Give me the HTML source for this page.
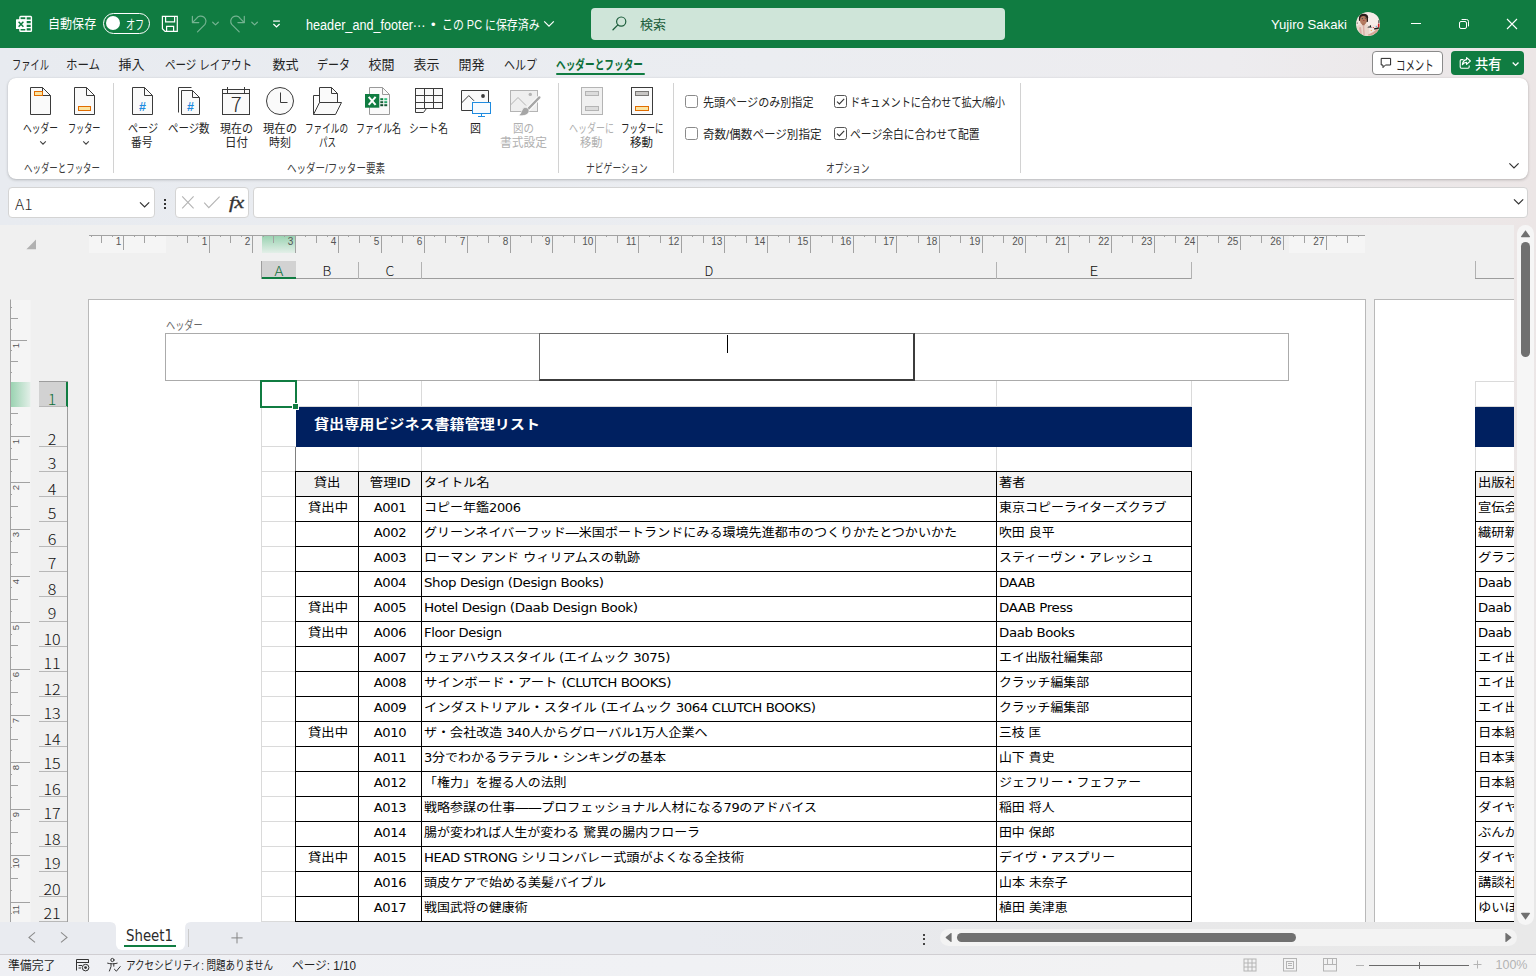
<!DOCTYPE html>
<html lang="ja"><head><meta charset="utf-8"><title>Excel</title>
<style>
html,body{margin:0;padding:0;}
body{width:1536px;height:976px;overflow:hidden;position:relative;background:#e9ebf0;font-family:"Liberation Sans","Noto Sans CJK JP",sans-serif;}
#app{position:absolute;left:0;top:0;width:1536px;height:976px;overflow:hidden;}
#app div,#app svg,#app span.t{position:absolute;}
#app svg{overflow:visible;}
span.t{white-space:nowrap;display:block;}
span.c{font-family:"DejaVu Sans","Noto Sans CJK JP",sans-serif;}
span.l{letter-spacing:-0.35px;}
</style></head>
<body><div id="app">
<div style="left:0px;top:0px;width:1536px;height:48px;background:#107c41;"></div>
<svg style="left:0;top:0" width="300" height="48" viewBox="0 0 300 48"><g fill="none" stroke="#fff" stroke-width="1.4"><rect x="19.9" y="16.5" width="11.5" height="14.7" rx="0.8"/><path d="M19.9 20.3H31.4M19.9 24H31.4M19.9 27.6H31.4M26 16.5V31.2"/></g><rect x="16" y="19.2" width="10" height="9.8" rx="0.6" fill="#fff"/><path d="M18.6 21.7 23.4 26.8M23.4 21.7 18.6 26.8" stroke="#107c41" stroke-width="1.5" fill="none"/><g fill="none" stroke="#fff" stroke-width="1.2" stroke-linejoin="miter"><path d="M162.4 16.4H177.3V31.3H165L162.4 28.7Z"/><path d="M165.6 16.4V21.8H174.6V16.4M166.6 31.3V26.4H173.6V31.3"/></g><g fill="none" stroke="#74b391" stroke-width="1.2" stroke-linecap="round" stroke-linejoin="round"><path d="M192.4 16.4V22.6H198.8"/><path d="M192.7 22.3 196.6 18.3A5.1 5.1 0 0 1 205 24.3L197.5 31.8"/></g><path d="M212.7 22.2 215.5 24.9 218.3 22.2" fill="none" stroke="#74b391" stroke-width="1.2" stroke-linecap="round" stroke-linejoin="round"/><g fill="none" stroke="#74b391" stroke-width="1.2" stroke-linecap="round" stroke-linejoin="round"><path d="M244.3 16.4V22.6H237.9"/><path d="M244 22.3 240.1 18.3A5.1 5.1 0 0 0 231.7 24.3L239.2 31.8"/></g><path d="M251.8 22.2 254.6 24.9 257.4 22.2" fill="none" stroke="#74b391" stroke-width="1.2" stroke-linecap="round" stroke-linejoin="round"/><path d="M273.1 21.1H279.9" fill="none" stroke="#fff" stroke-width="1.2"/><path d="M273.4 24 276.5 27 279.6 24" fill="none" stroke="#fff" stroke-width="1.2"/></svg>
<span class="t" id="t1" style="top:14px;font-size:13px;line-height:20px;color:#fff;left:48.3px;transform:scaleX(0.9266);transform-origin:0 50%;">自動保存</span>
<div style="left:102.5px;top:12.5px;width:47px;height:21px;border:1.4px solid #fff;border-radius:10.5px;box-sizing:border-box;"></div>
<div style="left:106.2px;top:16.3px;width:13.6px;height:13.6px;background:#fff;border-radius:7px;"></div>
<span class="t" id="t2" style="top:15px;font-size:13px;line-height:20px;color:#fff;left:126px;transform:scaleX(0.6996);transform-origin:0 50%;">オフ</span>
<span class="t" id="t3" style="top:14px;font-size:14px;line-height:22px;color:#fff;left:306px;transform:scaleX(0.9032);transform-origin:0 50%;">header_and_footer···</span>
<span class="t" id="t4" style="top:15px;font-size:13px;line-height:20px;color:#fff;left:431px;">•</span>
<span class="t" id="t5" style="top:15px;font-size:13px;line-height:20px;color:#fff;left:441.5px;transform:scaleX(0.8392);transform-origin:0 50%;">この PC に保存済み</span>
<svg style="left:543.2px;top:20px;" width="12" height="8" viewBox="0 0 12 8"><path d="M1.2 1.4 6 6.2 10.8 1.4" fill="none" stroke="#fff" stroke-width="1.2"/></svg>
<div style="left:591px;top:8px;width:414px;height:32px;background:#cfe5d9;border-radius:4px;"></div>
<svg style="left:611px;top:15px;" width="17" height="17" viewBox="0 0 17 17"><circle cx="10.2" cy="6.6" r="4.6" fill="none" stroke="#1d5e3c" stroke-width="1.2"/><path d="M6.9 9.9 2 14.8" stroke="#1d5e3c" stroke-width="1.3" stroke-linecap="round"/></svg>
<span class="t" id="t6" style="top:15px;font-size:13px;line-height:20px;color:#1d5e3c;left:640px;">検索</span>
<span class="t" id="t7" style="top:15px;font-size:13px;line-height:20px;color:#fff;left:1271px;transform:scaleX(1.0112);transform-origin:0 50%;">Yujiro Sakaki</span>
<svg style="left:1356px;top:12px" width="24" height="24" viewBox="0 0 24 24"><defs><clipPath id="av"><circle cx="12" cy="12" r="12"/></clipPath></defs>
<g clip-path="url(#av)"><rect width="24" height="24" fill="#f3e6e0"/>
<rect x="12" y="1" width="10" height="12" fill="#f6ece8"/>
<path d="M0.5 24V15.5C1.5 12.8 4 12.2 7 12.3L11.4 12.6C13 14 13.6 18 13.4 24Z" fill="#ead5ca"/>
<path d="M3 15.5 4.2 23.5H6L5 15ZM6.8 13 7.4 23.8H8.8L8.2 13Z" fill="#dbaea6"/>
<path d="M12 22.5C15 21.5 18.5 19.5 21.5 16.5L22.5 18.5C20 21.5 16 23.5 12.5 24Z" fill="#d9a594"/>
<ellipse cx="7.6" cy="5.3" rx="4.5" ry="3.5" fill="#2b1d1a"/><rect x="10.1" y="4.2" width="1.9" height="5.8" rx="0.8" fill="#2b1d1a"/><rect x="2.9" y="5.5" width="1.2" height="3.4" rx="0.6" fill="#2b1d1a"/>
<ellipse cx="7.4" cy="8.3" rx="3.4" ry="4.2" fill="#b57b60"/><rect x="6.1" y="11.6" width="2.6" height="1.6" fill="#a96f55"/>
<circle cx="6.3" cy="6.6" r="0.55" fill="#26414a"/><circle cx="9.3" cy="6.1" r="0.55" fill="#26414a"/><rect x="6.9" y="8.3" width="1.7" height="0.7" rx="0.3" fill="#9c3f3a"/>
<circle cx="1.2" cy="11" r="0.6" fill="#222"/>
<path d="M13.9 13.2H14.9V14.6L16 15.6H11.3L12.6 14.6H13.9Z" fill="#1c1c1c"/>
<circle cx="17.3" cy="15.5" r="0.6" fill="#e0202a"/><circle cx="20.3" cy="14.4" r="0.6" fill="#4aa3df"/><circle cx="15.3" cy="18.5" r="0.6" fill="#f0a030"/>
<rect x="21.9" y="11.4" width="1.6" height="4.2" rx="0.6" fill="#d61f26"/><path d="M18 16.2 22.6 15.2 23.5 16.6 18.4 17.8Z" fill="#1a1a1a"/><rect x="22.3" y="8.2" width="1.2" height="3" fill="#444"/>
</g></svg>
<div style="left:1411px;top:23px;width:10px;height:1px;background:#fff;"></div>
<svg style="left:1458px;top:18px;" width="12" height="12" viewBox="0 0 12 12"><g fill="none" stroke="#fff" stroke-width="1"><rect x="1.5" y="3.5" width="7" height="7" rx="1.5"/><path d="M3.6 1.5H8.5A2 2 0 0 1 10.5 3.5V8.4"/></g></svg>
<svg style="left:1506px;top:18px;" width="12" height="12" viewBox="0 0 12 12"><path d="M1 1 11 11M11 1 1 11" stroke="#fff" stroke-width="1.1"/></svg>
<div style="left:0px;top:48px;width:1536px;height:177px;background:linear-gradient(90deg,#e8ebf0 0%,#ebedf1 50%,#edecef 80%,#ece8e9 93%,#ece6e6 100%);"></div>
<span class="t" id="t8" style="top:55px;font-size:13px;line-height:20px;color:#242424;left:11.5px;transform:scaleX(0.7113);transform-origin:0 50%;">ファイル</span>
<span class="t" id="t9" style="top:55px;font-size:13px;line-height:20px;color:#242424;left:65.5px;transform:scaleX(0.8803);transform-origin:0 50%;">ホーム</span>
<span class="t" id="t10" style="top:55px;font-size:13px;line-height:20px;color:#242424;left:118.5px;">挿入</span>
<span class="t" id="t11" style="top:55px;font-size:13px;line-height:20px;color:#242424;left:164.5px;transform:scaleX(0.8104);transform-origin:0 50%;">ページ レイアウト</span>
<span class="t" id="t12" style="top:55px;font-size:13px;line-height:20px;color:#242424;left:272.5px;">数式</span>
<span class="t" id="t13" style="top:55px;font-size:13px;line-height:20px;color:#242424;left:316.5px;transform:scaleX(0.8458);transform-origin:0 50%;">データ</span>
<span class="t" id="t14" style="top:55px;font-size:13px;line-height:20px;color:#242424;left:368.5px;">校閲</span>
<span class="t" id="t15" style="top:55px;font-size:13px;line-height:20px;color:#242424;left:413.5px;">表示</span>
<span class="t" id="t16" style="top:55px;font-size:13px;line-height:20px;color:#242424;left:458.5px;">開発</span>
<span class="t" id="t17" style="top:55px;font-size:13px;line-height:20px;color:#242424;left:503.5px;transform:scaleX(0.8458);transform-origin:0 50%;">ヘルプ</span>
<span class="t" id="t18" style="top:55px;font-size:13px;line-height:20px;color:#0e6f3a;font-weight:700;left:556px;transform:scaleX(0.7435);transform-origin:0 50%;">ヘッダーとフッター</span>
<div style="left:556px;top:73px;width:89px;height:2.4px;background:#107c41;border-radius:1.2px;"></div>
<div style="left:1372px;top:51px;width:71px;height:24px;background:#fff;border:1px solid #8a8a8a;border-radius:4px;box-sizing:border-box;"></div>
<svg style="left:1380px;top:57px;" width="12" height="12" viewBox="0 0 12 12"><path d="M1.2 1.4H10.6V8H5.4L3 10.6V8H1.2Z" fill="none" stroke="#242424" stroke-width="1"/></svg>
<span class="t" id="t19" style="top:54px;font-size:14px;line-height:22px;color:#242424;left:1395.6px;transform:scaleX(0.6714);transform-origin:0 50%;">コメント</span>
<div style="left:1451px;top:51px;width:73px;height:24px;background:#107c41;border-radius:4px;"></div>
<svg style="left:1458px;top:56px;" width="14" height="14" viewBox="0 0 14 14"><g fill="none" stroke="#fff" stroke-width="1.1" stroke-linejoin="round"><path d="M5.5 3.6H3.4a1.2 1.2 0 0 0-1.2 1.2V11a1.2 1.2 0 0 0 1.2 1.2H10a1.2 1.2 0 0 0 1.2-1.2V9.6"/><path d="M8.6 1.6 12.4 5 8.6 8.4V6.4C6.4 6.4 5.2 7.2 4.4 8.8 4.6 5.8 6 4 8.6 3.6Z"/></g></svg>
<span class="t" id="t20" style="top:53px;font-size:14px;line-height:22px;color:#fff;font-weight:500;left:1474.8px;transform:scaleX(0.9429);transform-origin:0 50%;">共有</span>
<svg style="left:1511px;top:60.5px;" width="10" height="7" viewBox="0 0 10 7"><path d="M1.7 1.6 4.6 4.4 7.5 1.6" fill="none" stroke="#fff" stroke-width="1.4"/></svg>
<div style="left:8px;top:78px;width:1520px;height:100.6px;background:#fff;border-radius:8px;box-shadow:0 1px 3px rgba(0,0,0,.22),0 0 1px rgba(0,0,0,.12);"></div>
<div style="left:113px;top:83px;width:1px;height:90px;background:#d2d2d2;"></div>
<div style="left:558px;top:83px;width:1px;height:90px;background:#d2d2d2;"></div>
<div style="left:673px;top:83px;width:1px;height:90px;background:#d2d2d2;"></div>
<div style="left:1020px;top:83px;width:1px;height:90px;background:#d2d2d2;"></div>
<svg style="left:0;top:80px" width="700" height="45" viewBox="0 80 700 45"><path d="M30.5 87.5H42.5L50.5 95.5V114.5H30.5Z" fill="#fafafa" stroke="#3b3b3b"/><path d="M42.5 87.5V95.5H50.5" fill="none" stroke="#3b3b3b"/><rect x="34.5" y="91.5" width="8" height="4" fill="#fbe3a0" stroke="#e06c00"/><path d="M74.5 87.5H86.5L94.5 95.5V114.5H74.5Z" fill="#fafafa" stroke="#3b3b3b"/><path d="M86.5 87.5V95.5H94.5" fill="none" stroke="#3b3b3b"/><rect x="78.5" y="106.5" width="12" height="4" fill="#fbe3a0" stroke="#e06c00"/><path d="M132.5 87.5H144.5L152.5 95.5V114.5H132.5Z" fill="#fafafa" stroke="#3b3b3b"/><path d="M144.5 87.5V95.5H152.5" fill="none" stroke="#3b3b3b"/><text x="142.6" y="110.6" font-size="12.5" font-weight="700" fill="#1e8be0" text-anchor="middle" font-family="Liberation Sans,sans-serif">#</text><path d="M178.5 112.5V87.5H191.5" fill="none" stroke="#3b3b3b"/><path d="M181.5 90.5H192.5L199.5 97.5V114.5H181.5Z" fill="#fafafa" stroke="#3b3b3b"/><path d="M192.5 90.5V97.5H199.5" fill="none" stroke="#3b3b3b"/><text x="190.4" y="110.6" font-size="12.5" font-weight="700" fill="#1e8be0" text-anchor="middle" font-family="Liberation Sans,sans-serif">#</text><rect x="222.5" y="89.5" width="27" height="25" fill="#fafafa" stroke="#3b3b3b"/><path d="M222.5 93.5H249.5M227.5 87V93.5M244.5 87V93.5" fill="none" stroke="#3b3b3b"/><text x="236.3" y="112" font-size="20.5" font-weight="300" fill="#2e2e2e" text-anchor="middle" font-family="Noto Sans CJK JP,sans-serif">7</text><circle cx="280" cy="101" r="13.5" fill="#fafafa" stroke="#3b3b3b"/><path d="M280.5 92.5V102.5H287.5" fill="none" stroke="#3b3b3b"/><path d="M319.5 95.5H313.5V114.5" fill="none" stroke="#3b3b3b"/><path d="M319.5 102.5V87.5H331.5L337.5 93.5V102.5" fill="#fafafa" stroke="#3b3b3b"/><path d="M331.5 87.5V93.5H337.5" fill="none" stroke="#3b3b3b"/><path d="M319.5 102.5H341.5L335.5 114.5H313.5Z" fill="#fafafa" stroke="#3b3b3b"/><path d="M369.5 87.5H382.5L389.5 94.5V114.5H369.5Z" fill="#fafafa" stroke="#9a9a9a"/><path d="M382.5 87.5V94.5H389.5" fill="none" stroke="#9a9a9a"/><rect x="380.3" y="98.2" width="2.9" height="2" fill="#107c41"/><rect x="380.3" y="101.2" width="2.9" height="2" fill="#185c37"/><rect x="380.3" y="104.2" width="2.9" height="2" fill="#0b4a2a"/><rect x="384.3" y="98.2" width="2.9" height="2" fill="#33c481"/><rect x="384.3" y="101.2" width="2.9" height="2" fill="#21a366"/><rect x="384.3" y="104.2" width="2.9" height="2" fill="#185c37"/><rect x="365" y="94" width="14.3" height="13.7" fill="#107c41"/><path d="M368.7 96.8 375.6 104.9M375.6 96.8 368.7 104.9" stroke="#fff" stroke-width="2" fill="none"/><path d="M415.5 108.5V112.5H423.5L426.5 108.5" fill="#fafafa" stroke="#3b3b3b"/><rect x="415.5" y="88.5" width="27" height="20" fill="#fafafa" stroke="#3b3b3b"/><path d="M424.5 88.5V108.5M433.5 88.5V108.5M415.5 95.5H442.5M415.5 102.5H442.5" fill="none" stroke="#3b3b3b"/><path d="M472.5 110.5H461.5V90.5H488.5V102.5" fill="#fafafa" stroke="#3b3b3b"/><path d="M461.5 103 468.8 95.6 474 100.8" fill="none" stroke="#3b3b3b"/><circle cx="483" cy="96" r="1.9" fill="#3b3b3b"/><rect x="472.5" y="102.5" width="18" height="11" fill="#f7fbff" stroke="#1e8be0"/><path d="M481.5 113.5V116.5M478 116.5H485" stroke="#1e8be0" fill="none"/><rect x="510.5" y="90.5" width="27" height="21" fill="#efefef" stroke="#b4b4b4"/><path d="M510.5 105 518 97.5 526 105.5" fill="none" stroke="#b4b4b4"/><circle cx="530.3" cy="94.4" r="1.7" fill="#b4b4b4"/><path d="M539.6 97.2 528 109.2" stroke="#fff" stroke-width="4.2" fill="none"/><path d="M539.4 97.4 527.5 109.6" stroke="#a6a6a6" stroke-width="2.3" stroke-linecap="round" fill="none"/><path d="M524.3 107.6C527 106.9 529.4 109 528.9 111.6 528.3 114.8 524.4 116.2 518.6 115.6 521.6 114.4 521.4 108.6 524.3 107.6Z" fill="#a6a6a6" stroke="#fff" stroke-width="0.6"/><rect x="581.5" y="87.5" width="21" height="27" fill="#f0f0f0" stroke="#b4b4b4"/><rect x="585.5" y="91.5" width="13" height="4" fill="#dcdcdc" stroke="#b4b4b4"/><rect x="585.5" y="106.5" width="13" height="4" fill="#dcdcdc" stroke="#b4b4b4"/><rect x="631.5" y="87.5" width="21" height="27" fill="#fafafa" stroke="#3b3b3b"/><rect x="635.5" y="91.5" width="13" height="4" fill="#c8c6c4" stroke="#797775"/><rect x="635.5" y="106.5" width="13" height="4" fill="#fbe3a0" stroke="#e06c00"/></svg>
<span class="t" id="t21" style="top:119px;font-size:12px;line-height:20px;color:#242424;left:23px;transform:scaleX(0.7289);transform-origin:0 50%;">ヘッダー</span>
<span class="t" id="t22" style="top:119px;font-size:12px;line-height:20px;color:#242424;left:67.5px;transform:scaleX(0.6769);transform-origin:0 50%;">フッター</span>
<span class="t" id="t23" style="top:119px;font-size:12px;line-height:20px;color:#242424;left:128px;transform:scaleX(0.8388);transform-origin:0 50%;">ページ</span>
<span class="t" id="t24" style="top:133px;font-size:12px;line-height:20px;color:#242424;left:131px;transform:scaleX(0.8953);transform-origin:0 50%;">番号</span>
<span class="t" id="t25" style="top:119px;font-size:12px;line-height:20px;color:#242424;left:168px;transform:scaleX(0.8688);transform-origin:0 50%;">ページ数</span>
<span class="t" id="t26" style="top:119px;font-size:12px;line-height:20px;color:#242424;left:219.5px;transform:scaleX(0.9163);transform-origin:0 50%;">現在の</span>
<span class="t" id="t27" style="top:133px;font-size:12px;line-height:20px;color:#242424;left:224.5px;transform:scaleX(0.9577);transform-origin:0 50%;">日付</span>
<span class="t" id="t28" style="top:119px;font-size:12px;line-height:20px;color:#242424;left:263px;transform:scaleX(0.9440);transform-origin:0 50%;">現在の</span>
<span class="t" id="t29" style="top:133px;font-size:12px;line-height:20px;color:#242424;left:269px;transform:scaleX(0.9161);transform-origin:0 50%;">時刻</span>
<span class="t" id="t30" style="top:119px;font-size:12px;line-height:20px;color:#242424;left:305px;transform:scaleX(0.7165);transform-origin:0 50%;">ファイルの</span>
<span class="t" id="t31" style="top:133px;font-size:12px;line-height:20px;color:#242424;left:319px;transform:scaleX(0.7079);transform-origin:0 50%;">パス</span>
<span class="t" id="t32" style="top:119px;font-size:12px;line-height:20px;color:#242424;left:356px;transform:scaleX(0.7498);transform-origin:0 50%;">ファイル名</span>
<span class="t" id="t33" style="top:119px;font-size:12px;line-height:20px;color:#242424;left:409px;transform:scaleX(0.8122);transform-origin:0 50%;">シート名</span>
<span class="t" id="t34" style="top:119px;font-size:12px;line-height:20px;color:#242424;left:469.5px;transform:scaleX(0.9155);transform-origin:0 50%;">図</span>
<span class="t" id="t35" style="top:119px;font-size:12px;line-height:20px;color:#b0b0b0;left:513px;transform:scaleX(0.8744);transform-origin:0 50%;">図の</span>
<span class="t" id="t36" style="top:133px;font-size:12px;line-height:20px;color:#b0b0b0;left:500px;transform:scaleX(0.9788);transform-origin:0 50%;">書式設定</span>
<span class="t" id="t37" style="top:119px;font-size:12px;line-height:20px;color:#b0b0b0;left:569px;transform:scaleX(0.7498);transform-origin:0 50%;">ヘッダーに</span>
<span class="t" id="t38" style="top:133px;font-size:12px;line-height:20px;color:#b0b0b0;left:580px;transform:scaleX(0.9369);transform-origin:0 50%;">移動</span>
<span class="t" id="t39" style="top:119px;font-size:12px;line-height:20px;color:#242424;left:620.5px;transform:scaleX(0.7081);transform-origin:0 50%;">フッターに</span>
<span class="t" id="t40" style="top:133px;font-size:12px;line-height:20px;color:#242424;left:630px;transform:scaleX(0.9577);transform-origin:0 50%;">移動</span>
<svg style="left:38.5px;top:139.5px;" width="8" height="6" viewBox="0 0 8 6"><path d="M1.2 1.4 4 4.2 6.8 1.4" fill="none" stroke="#444" stroke-width="1.1"/></svg>
<svg style="left:82px;top:139.5px;" width="8" height="6" viewBox="0 0 8 6"><path d="M1.2 1.4 4 4.2 6.8 1.4" fill="none" stroke="#444" stroke-width="1.1"/></svg>
<span class="t" id="t41" style="top:159px;font-size:12px;line-height:20px;color:#3a3a3a;left:24px;transform:scaleX(0.7036);transform-origin:0 50%;">ヘッダーとフッター</span>
<span class="t" id="t42" style="top:159px;font-size:12px;line-height:20px;color:#3a3a3a;left:287px;transform:scaleX(0.7945);transform-origin:0 50%;">ヘッダー/フッター要素</span>
<span class="t" id="t43" style="top:159px;font-size:12px;line-height:20px;color:#3a3a3a;left:586px;transform:scaleX(0.7342);transform-origin:0 50%;">ナビゲーション</span>
<span class="t" id="t44" style="top:159px;font-size:12px;line-height:20px;color:#3a3a3a;left:825.5px;transform:scaleX(0.7248);transform-origin:0 50%;">オプション</span>
<div style="left:685px;top:95px;width:13px;height:13px;box-sizing:border-box;border:1px solid #8a8a8a;border-radius:2.5px;background:#fff;"></div>
<div style="left:685px;top:127px;width:13px;height:13px;box-sizing:border-box;border:1px solid #8a8a8a;border-radius:2.5px;background:#fff;"></div>
<div style="left:834px;top:95px;width:13px;height:13px;box-sizing:border-box;border:1px solid #555;border-radius:2.5px;background:#fff;"><svg width="13" height="13" viewBox="0 0 13 13" style="left:-1px;top:-1px"><path d="M3 6.6 5.4 9 10.2 3.9" fill="none" stroke="#333" stroke-width="1.1"/></svg></div>
<div style="left:834px;top:127px;width:13px;height:13px;box-sizing:border-box;border:1px solid #555;border-radius:2.5px;background:#fff;"><svg width="13" height="13" viewBox="0 0 13 13" style="left:-1px;top:-1px"><path d="M3 6.6 5.4 9 10.2 3.9" fill="none" stroke="#333" stroke-width="1.1"/></svg></div>
<span class="t" id="t45" style="top:93px;font-size:12px;line-height:20px;color:#242424;left:702.6px;transform:scaleX(0.9226);transform-origin:0 50%;">先頭ページのみ別指定</span>
<span class="t" id="t46" style="top:125px;font-size:12px;line-height:20px;color:#242424;left:702.6px;transform:scaleX(0.9626);transform-origin:0 50%;">奇数/偶数ページ別指定</span>
<span class="t" id="t47" style="top:93px;font-size:12px;line-height:20px;color:#242424;left:850px;transform:scaleX(0.8454);transform-origin:0 50%;">ドキュメントに合わせて拡大/縮小</span>
<span class="t" id="t48" style="top:125px;font-size:12px;line-height:20px;color:#242424;left:850px;transform:scaleX(0.9008);transform-origin:0 50%;">ページ余白に合わせて配置</span>
<svg style="left:1507.8px;top:161.8px;" width="12" height="8" viewBox="0 0 12 8"><path d="M1.4 1.4 6 6 10.6 1.4" fill="none" stroke="#333" stroke-width="1.2"/></svg>
<div style="left:8px;top:187px;width:146.5px;height:30.5px;background:#fff;border:1px solid #d4d4d4;border-radius:4px;box-sizing:border-box;"></div>
<span class="t" id="t49" style="top:192px;font-size:15px;line-height:24px;color:#2a2a2a;font-weight:300;font-family:'Noto Sans CJK JP',sans-serif;left:15.3px;transform:scaleX(1.0380);transform-origin:0 50%;">A1</span>
<svg style="left:139px;top:201px;" width="12" height="8" viewBox="0 0 12 8"><path d="M1 1.4 5.6 6 10.2 1.4" fill="none" stroke="#333" stroke-width="1.2"/></svg>
<div style="left:164px;top:199px;width:2px;height:2px;background:#333;"></div>
<div style="left:164px;top:203px;width:2px;height:2px;background:#333;"></div>
<div style="left:164px;top:207px;width:2px;height:2px;background:#333;"></div>
<div style="left:175px;top:187px;width:73.5px;height:30.5px;background:#fff;border:1px solid #d4d4d4;border-radius:4px;box-sizing:border-box;"></div>
<svg style="left:181px;top:195px;" width="14" height="14" viewBox="0 0 14 14"><path d="M1.2 1.4 12.6 13.4M12.6 1.4 1.2 13.4" stroke="#b4b4b4" stroke-width="1.1" fill="none"/></svg>
<svg style="left:203px;top:195px;" width="18" height="14" viewBox="0 0 18 14"><path d="M1.2 7.6 5.8 12.6 16.6 1.6" stroke="#b4b4b4" stroke-width="1.1" fill="none"/></svg>
<span class="t" id="t50" style="top:188px;font-size:17.5px;line-height:28px;color:#333;font-family:'Liberation Serif',serif;left:228.6px;transform:scaleX(1.2542);transform-origin:0 50%;font-style:italic;letter-spacing:-0.5px;-webkit-text-stroke:0.35px #333;">fx</span>
<div style="left:253px;top:187px;width:1275px;height:30.5px;background:#fff;border:1px solid #d4d4d4;border-radius:4px;box-sizing:border-box;"></div>
<svg style="left:1513px;top:198px;" width="12" height="8" viewBox="0 0 12 8"><path d="M1 1.4 5.6 6 10.2 1.4" fill="none" stroke="#333" stroke-width="1.2"/></svg>
<div style="left:0px;top:225px;width:1536px;height:697px;background:#f0f0f0;"></div>
<svg style="left:26px;top:239px;" width="11" height="11" viewBox="0 0 11 11"><path d="M10 0.6V10.2H0.4Z" fill="#b1b1b1"/></svg>
<svg style="left:0;top:230px" width="1400" height="26" viewBox="0 230 1400 26" font-family="Liberation Sans,sans-serif" font-size="10" fill="#555"><rect x="89" y="236" width="77" height="17" fill="#f5f5f5"/><rect x="1289" y="236" width="76" height="17" fill="#f5f5f5"/><defs><linearGradient id="hg" x1="0" y1="0" x2="0" y2="1"><stop offset="0" stop-color="#9bd3b2"/><stop offset="1" stop-color="#e3efe8"/></linearGradient><linearGradient id="vg" x1="0" y1="0" x2="1" y2="0"><stop offset="0" stop-color="#9bd3b2"/><stop offset="1" stop-color="#e3efe8"/></linearGradient></defs><rect x="262" y="236" width="34" height="17" fill="url(#hg)"/><text x="121.3" y="245.2" text-anchor="end">1</text><text x="207.3" y="245.2" text-anchor="end">1</text><text x="250.3" y="245.2" text-anchor="end">2</text><text x="293.3" y="245.2" text-anchor="end">3</text><text x="336.3" y="245.2" text-anchor="end">4</text><text x="379.3" y="245.2" text-anchor="end">5</text><text x="422.3" y="245.2" text-anchor="end">6</text><text x="465.3" y="245.2" text-anchor="end">7</text><text x="508.3" y="245.2" text-anchor="end">8</text><text x="550.3" y="245.2" text-anchor="end">9</text><text x="593.3" y="245.2" text-anchor="end">10</text><text x="636.3" y="245.2" text-anchor="end">11</text><text x="679.3" y="245.2" text-anchor="end">12</text><text x="722.3" y="245.2" text-anchor="end">13</text><text x="765.3" y="245.2" text-anchor="end">14</text><text x="808.3" y="245.2" text-anchor="end">15</text><text x="851.3" y="245.2" text-anchor="end">16</text><text x="894.3" y="245.2" text-anchor="end">17</text><text x="937.3" y="245.2" text-anchor="end">18</text><text x="980.3" y="245.2" text-anchor="end">19</text><text x="1023.3" y="245.2" text-anchor="end">20</text><text x="1066.3" y="245.2" text-anchor="end">21</text><text x="1109.3" y="245.2" text-anchor="end">22</text><text x="1152.3" y="245.2" text-anchor="end">23</text><text x="1195.3" y="245.2" text-anchor="end">24</text><text x="1238.3" y="245.2" text-anchor="end">25</text><text x="1281.3" y="245.2" text-anchor="end">26</text><text x="1324.3" y="245.2" text-anchor="end">27</text><path d="M89 235.5H1365M91.5 235V237M101.5 235V243M112.5 235V237M123.5 235V250M134.5 235V237M144.5 235V243M155.5 235V237M177.5 235V237M187.5 235V243M198.5 235V237M209.5 235V253M220.5 235V237M230.5 235V243M241.5 235V237M252.5 235V253M263.5 235V237M273.5 235V243M284.5 235V237M295.5 235V253M305.5 235V237M316.5 235V243M327.5 235V237M338.5 235V253M348.5 235V237M359.5 235V243M370.5 235V237M381.5 235V253M391.5 235V237M402.5 235V243M413.5 235V237M424.5 235V253M434.5 235V237M445.5 235V243M456.5 235V237M467.5 235V253M477.5 235V237M488.5 235V243M499.5 235V237M510.5 235V253M520.5 235V237M531.5 235V243M542.5 235V237M552.5 235V253M563.5 235V237M574.5 235V243M585.5 235V237M595.5 235V253M606.5 235V237M617.5 235V243M628.5 235V237M638.5 235V253M649.5 235V237M660.5 235V243M671.5 235V237M681.5 235V253M692.5 235V237M703.5 235V243M714.5 235V237M724.5 235V253M735.5 235V237M746.5 235V243M756.5 235V237M767.5 235V253M778.5 235V237M789.5 235V243M799.5 235V237M810.5 235V253M821.5 235V237M832.5 235V243M842.5 235V237M853.5 235V253M864.5 235V237M875.5 235V243M885.5 235V237M896.5 235V253M907.5 235V237M918.5 235V243M928.5 235V237M939.5 235V253M950.5 235V237M960.5 235V243M971.5 235V237M982.5 235V253M993.5 235V237M1003.5 235V243M1014.5 235V237M1025.5 235V253M1036.5 235V237M1046.5 235V243M1057.5 235V237M1068.5 235V253M1079.5 235V237M1089.5 235V243M1100.5 235V237M1111.5 235V253M1122.5 235V237M1132.5 235V243M1143.5 235V237M1154.5 235V253M1164.5 235V237M1175.5 235V243M1186.5 235V237M1197.5 235V253M1207.5 235V237M1218.5 235V243M1229.5 235V237M1240.5 235V250M1250.5 235V237M1261.5 235V243M1272.5 235V237M1283.5 235V250M1293.5 235V237M1304.5 235V243M1315.5 235V237M1326.5 235V250M1336.5 235V237M1347.5 235V243M1358.5 235V237" fill="none" stroke="#a2a2a2"/></svg>
<svg style="left:0;top:296px" width="34" height="626" viewBox="0 296 34 626" font-family="Liberation Sans,sans-serif" font-size="9.6" fill="#555"><rect x="11" y="300" width="19.5" height="622" fill="#f5f5f5"/><rect x="11" y="382" width="19.5" height="25" fill="url(#vg)"/><text transform="translate(18.6 342.8) rotate(-90)" text-anchor="end">1</text><text transform="translate(18.6 438.8) rotate(-90)" text-anchor="end">1</text><text transform="translate(18.6 484.8) rotate(-90)" text-anchor="end">2</text><text transform="translate(18.6 531.8) rotate(-90)" text-anchor="end">3</text><text transform="translate(18.6 578.8) rotate(-90)" text-anchor="end">4</text><text transform="translate(18.6 624.8) rotate(-90)" text-anchor="end">5</text><text transform="translate(18.6 671.8) rotate(-90)" text-anchor="end">6</text><text transform="translate(18.6 717.8) rotate(-90)" text-anchor="end">7</text><text transform="translate(18.6 764.8) rotate(-90)" text-anchor="end">8</text><text transform="translate(18.6 811.8) rotate(-90)" text-anchor="end">9</text><text transform="translate(18.6 857.8) rotate(-90)" text-anchor="end">10</text><text transform="translate(18.6 904.8) rotate(-90)" text-anchor="end">11</text><path d="M10.5 299.5V922M10.5 372.5H12M10.5 361.5H18M10.5 350.5H12M10.5 340.5H27M10.5 329.5H12M10.5 318.5H18M10.5 307.5H12M10.5 413.5H18M10.5 424.5H12M10.5 436.5H30M10.5 448.5H12M10.5 459.5H18M10.5 471.5H12M10.5 482.5H30M10.5 494.5H12M10.5 506.5H18M10.5 517.5H12M10.5 529.5H30M10.5 541.5H12M10.5 552.5H18M10.5 564.5H12M10.5 576.5H30M10.5 587.5H12M10.5 599.5H18M10.5 611.5H12M10.5 622.5H30M10.5 634.5H12M10.5 645.5H18M10.5 657.5H12M10.5 669.5H30M10.5 680.5H12M10.5 692.5H18M10.5 704.5H12M10.5 715.5H30M10.5 727.5H12M10.5 739.5H18M10.5 750.5H12M10.5 762.5H30M10.5 774.5H12M10.5 785.5H18M10.5 797.5H12M10.5 809.5H30M10.5 820.5H12M10.5 832.5H18M10.5 843.5H12M10.5 855.5H30M10.5 867.5H12M10.5 878.5H18M10.5 890.5H12M10.5 902.5H30M10.5 913.5H12" fill="none" stroke="#a2a2a2"/></svg>
<div style="left:261.5px;top:261px;width:34.5px;height:16px;background:#d2d2d2;"></div>
<div style="left:261.5px;top:277px;width:34.5px;height:2px;background:#107c41;"></div>
<div style="left:261px;top:261px;width:1px;height:18px;background:#9d9d9d;"></div>
<div style="left:296px;top:278px;width:896px;height:1px;background:#9d9d9d;"></div>
<div style="left:358px;top:262px;width:1px;height:17px;background:#b2b2b2;"></div>
<div style="left:421px;top:262px;width:1px;height:17px;background:#b2b2b2;"></div>
<div style="left:996px;top:262px;width:1px;height:17px;background:#b2b2b2;"></div>
<div style="left:1191px;top:262px;width:1px;height:17px;background:#b2b2b2;"></div>
<span class="t" id="t51" style="top:261px;font-size:12.8px;line-height:20px;color:#0e6f3a;font-weight:300;font-family:'Noto Sans CJK JP',sans-serif;left:278.75px;transform:translateX(-50%) scaleX(1.1685);transform-origin:50% 50%;">A</span>
<span class="t" id="t52" style="top:261px;font-size:12.8px;line-height:20px;color:#111;font-weight:300;font-family:'Noto Sans CJK JP',sans-serif;left:327.25px;transform:translateX(-50%) scaleX(1.0707);transform-origin:50% 50%;">B</span>
<span class="t" id="t53" style="top:261px;font-size:12.8px;line-height:20px;color:#111;font-weight:300;font-family:'Noto Sans CJK JP',sans-serif;left:390px;transform:translateX(-50%) scaleX(1.0957);transform-origin:50% 50%;">C</span>
<span class="t" id="t54" style="top:261px;font-size:12.8px;line-height:20px;color:#111;font-weight:300;font-family:'Noto Sans CJK JP',sans-serif;left:709px;transform:translateX(-50%) scaleX(1.0221);transform-origin:50% 50%;">D</span>
<span class="t" id="t55" style="top:261px;font-size:12.8px;line-height:20px;color:#111;font-weight:300;font-family:'Noto Sans CJK JP',sans-serif;left:1094px;transform:translateX(-50%) scaleX(1.1983);transform-origin:50% 50%;">E</span>
<div style="left:1475px;top:261px;width:1px;height:18px;background:#b2b2b2;"></div>
<div style="left:1475px;top:278px;width:39px;height:1px;background:#9d9d9d;"></div>
<div style="left:39px;top:382px;width:27px;height:25px;background:#d2d2d2;"></div>
<div style="left:66px;top:382px;width:2px;height:25px;background:#107c41;"></div>
<div style="left:67px;top:407px;width:1px;height:515px;background:#9d9d9d;"></div>
<div style="left:39px;top:406px;width:28px;height:1px;background:#b8b8b8;"></div>
<span class="t" id="t56" style="top:388px;font-size:14px;line-height:22px;color:#0e6f3a;font-weight:300;font-family:'Noto Sans CJK JP',sans-serif;left:52.3px;transform:translateX(-50%) scaleX(1.1467);transform-origin:50% 50%;">1</span>
<div style="left:39px;top:446px;width:28px;height:1px;background:#b8b8b8;"></div>
<span class="t" id="t57" style="top:428px;font-size:14px;line-height:22px;color:#111;font-weight:300;font-family:'Noto Sans CJK JP',sans-serif;left:52.3px;transform:translateX(-50%) scaleX(1.1467);transform-origin:50% 50%;">2</span>
<div style="left:39px;top:471px;width:28px;height:1px;background:#b8b8b8;"></div>
<span class="t" id="t58" style="top:452px;font-size:14px;line-height:22px;color:#111;font-weight:300;font-family:'Noto Sans CJK JP',sans-serif;left:52.3px;transform:translateX(-50%) scaleX(1.1467);transform-origin:50% 50%;">3</span>
<div style="left:39px;top:496px;width:28px;height:1px;background:#b8b8b8;"></div>
<span class="t" id="t59" style="top:478px;font-size:14px;line-height:22px;color:#111;font-weight:300;font-family:'Noto Sans CJK JP',sans-serif;left:52.3px;transform:translateX(-50%) scaleX(1.1467);transform-origin:50% 50%;">4</span>
<div style="left:39px;top:521px;width:28px;height:1px;background:#b8b8b8;"></div>
<span class="t" id="t60" style="top:502px;font-size:14px;line-height:22px;color:#111;font-weight:300;font-family:'Noto Sans CJK JP',sans-serif;left:52.3px;transform:translateX(-50%) scaleX(1.1467);transform-origin:50% 50%;">5</span>
<div style="left:39px;top:546px;width:28px;height:1px;background:#b8b8b8;"></div>
<span class="t" id="t61" style="top:528px;font-size:14px;line-height:22px;color:#111;font-weight:300;font-family:'Noto Sans CJK JP',sans-serif;left:52.3px;transform:translateX(-50%) scaleX(1.1467);transform-origin:50% 50%;">6</span>
<div style="left:39px;top:571px;width:28px;height:1px;background:#b8b8b8;"></div>
<span class="t" id="t62" style="top:552px;font-size:14px;line-height:22px;color:#111;font-weight:300;font-family:'Noto Sans CJK JP',sans-serif;left:52.3px;transform:translateX(-50%) scaleX(1.1467);transform-origin:50% 50%;">7</span>
<div style="left:39px;top:596px;width:28px;height:1px;background:#b8b8b8;"></div>
<span class="t" id="t63" style="top:578px;font-size:14px;line-height:22px;color:#111;font-weight:300;font-family:'Noto Sans CJK JP',sans-serif;left:52.3px;transform:translateX(-50%) scaleX(1.1467);transform-origin:50% 50%;">8</span>
<div style="left:39px;top:621px;width:28px;height:1px;background:#b8b8b8;"></div>
<span class="t" id="t64" style="top:602px;font-size:14px;line-height:22px;color:#111;font-weight:300;font-family:'Noto Sans CJK JP',sans-serif;left:52.3px;transform:translateX(-50%) scaleX(1.1467);transform-origin:50% 50%;">9</span>
<div style="left:39px;top:646px;width:28px;height:1px;background:#b8b8b8;"></div>
<span class="t" id="t65" style="top:628px;font-size:14px;line-height:22px;color:#111;font-weight:300;font-family:'Noto Sans CJK JP',sans-serif;left:52.3px;transform:translateX(-50%) scaleX(1.1479);transform-origin:50% 50%;">10</span>
<div style="left:39px;top:671px;width:28px;height:1px;background:#b8b8b8;"></div>
<span class="t" id="t66" style="top:652px;font-size:14px;line-height:22px;color:#111;font-weight:300;font-family:'Noto Sans CJK JP',sans-serif;left:52.3px;transform:translateX(-50%) scaleX(1.1479);transform-origin:50% 50%;">11</span>
<div style="left:39px;top:696px;width:28px;height:1px;background:#b8b8b8;"></div>
<span class="t" id="t67" style="top:678px;font-size:14px;line-height:22px;color:#111;font-weight:300;font-family:'Noto Sans CJK JP',sans-serif;left:52.3px;transform:translateX(-50%) scaleX(1.1479);transform-origin:50% 50%;">12</span>
<div style="left:39px;top:721px;width:28px;height:1px;background:#b8b8b8;"></div>
<span class="t" id="t68" style="top:702px;font-size:14px;line-height:22px;color:#111;font-weight:300;font-family:'Noto Sans CJK JP',sans-serif;left:52.3px;transform:translateX(-50%) scaleX(1.1479);transform-origin:50% 50%;">13</span>
<div style="left:39px;top:746px;width:28px;height:1px;background:#b8b8b8;"></div>
<span class="t" id="t69" style="top:728px;font-size:14px;line-height:22px;color:#111;font-weight:300;font-family:'Noto Sans CJK JP',sans-serif;left:52.3px;transform:translateX(-50%) scaleX(1.1479);transform-origin:50% 50%;">14</span>
<div style="left:39px;top:771px;width:28px;height:1px;background:#b8b8b8;"></div>
<span class="t" id="t70" style="top:752px;font-size:14px;line-height:22px;color:#111;font-weight:300;font-family:'Noto Sans CJK JP',sans-serif;left:52.3px;transform:translateX(-50%) scaleX(1.1479);transform-origin:50% 50%;">15</span>
<div style="left:39px;top:796px;width:28px;height:1px;background:#b8b8b8;"></div>
<span class="t" id="t71" style="top:778px;font-size:14px;line-height:22px;color:#111;font-weight:300;font-family:'Noto Sans CJK JP',sans-serif;left:52.3px;transform:translateX(-50%) scaleX(1.1479);transform-origin:50% 50%;">16</span>
<div style="left:39px;top:821px;width:28px;height:1px;background:#b8b8b8;"></div>
<span class="t" id="t72" style="top:802px;font-size:14px;line-height:22px;color:#111;font-weight:300;font-family:'Noto Sans CJK JP',sans-serif;left:52.3px;transform:translateX(-50%) scaleX(1.1479);transform-origin:50% 50%;">17</span>
<div style="left:39px;top:846px;width:28px;height:1px;background:#b8b8b8;"></div>
<span class="t" id="t73" style="top:828px;font-size:14px;line-height:22px;color:#111;font-weight:300;font-family:'Noto Sans CJK JP',sans-serif;left:52.3px;transform:translateX(-50%) scaleX(1.1479);transform-origin:50% 50%;">18</span>
<div style="left:39px;top:871px;width:28px;height:1px;background:#b8b8b8;"></div>
<span class="t" id="t74" style="top:852px;font-size:14px;line-height:22px;color:#111;font-weight:300;font-family:'Noto Sans CJK JP',sans-serif;left:52.3px;transform:translateX(-50%) scaleX(1.1479);transform-origin:50% 50%;">19</span>
<div style="left:39px;top:896px;width:28px;height:1px;background:#b8b8b8;"></div>
<span class="t" id="t75" style="top:878px;font-size:14px;line-height:22px;color:#111;font-weight:300;font-family:'Noto Sans CJK JP',sans-serif;left:52.3px;transform:translateX(-50%) scaleX(1.1479);transform-origin:50% 50%;">20</span>
<div style="left:39px;top:921px;width:28px;height:1px;background:#b8b8b8;"></div>
<span class="t" id="t76" style="top:902px;font-size:14px;line-height:22px;color:#111;font-weight:300;font-family:'Noto Sans CJK JP',sans-serif;left:52.3px;transform:translateX(-50%) scaleX(1.1479);transform-origin:50% 50%;">21</span>
<div style="left:39px;top:381px;width:29px;height:1px;background:#9d9d9d;"></div>
<div style="left:88px;top:299px;width:1278px;height:623px;background:#fff;border:1px solid #b9b9b9;border-bottom:0;box-sizing:border-box;"></div>
<div style="left:1374px;top:299px;width:140px;height:623px;background:#fff;border:1px solid #b9b9b9;border-bottom:0;border-right:0;box-sizing:border-box;"></div>
<div style="left:261px;top:381px;width:1px;height:26px;background:#dadada;"></div>
<div style="left:358px;top:381px;width:1px;height:26px;background:#dadada;"></div>
<div style="left:421px;top:381px;width:1px;height:26px;background:#dadada;"></div>
<div style="left:996px;top:381px;width:1px;height:26px;background:#dadada;"></div>
<div style="left:1191px;top:381px;width:1px;height:26px;background:#dadada;"></div>
<div style="left:358px;top:447px;width:1px;height:25px;background:#dadada;"></div>
<div style="left:421px;top:447px;width:1px;height:25px;background:#dadada;"></div>
<div style="left:996px;top:447px;width:1px;height:25px;background:#dadada;"></div>
<div style="left:1191px;top:447px;width:1px;height:25px;background:#dadada;"></div>
<div style="left:261px;top:407px;width:1px;height:515px;background:#dadada;"></div>
<div style="left:261px;top:446px;width:35px;height:1px;background:#dadada;"></div>
<div style="left:261px;top:471px;width:35px;height:1px;background:#dadada;"></div>
<div style="left:261px;top:496px;width:35px;height:1px;background:#dadada;"></div>
<div style="left:261px;top:521px;width:35px;height:1px;background:#dadada;"></div>
<div style="left:261px;top:546px;width:35px;height:1px;background:#dadada;"></div>
<div style="left:261px;top:571px;width:35px;height:1px;background:#dadada;"></div>
<div style="left:261px;top:596px;width:35px;height:1px;background:#dadada;"></div>
<div style="left:261px;top:621px;width:35px;height:1px;background:#dadada;"></div>
<div style="left:261px;top:646px;width:35px;height:1px;background:#dadada;"></div>
<div style="left:261px;top:671px;width:35px;height:1px;background:#dadada;"></div>
<div style="left:261px;top:696px;width:35px;height:1px;background:#dadada;"></div>
<div style="left:261px;top:721px;width:35px;height:1px;background:#dadada;"></div>
<div style="left:261px;top:746px;width:35px;height:1px;background:#dadada;"></div>
<div style="left:261px;top:771px;width:35px;height:1px;background:#dadada;"></div>
<div style="left:261px;top:796px;width:35px;height:1px;background:#dadada;"></div>
<div style="left:261px;top:821px;width:35px;height:1px;background:#dadada;"></div>
<div style="left:261px;top:846px;width:35px;height:1px;background:#dadada;"></div>
<div style="left:261px;top:871px;width:35px;height:1px;background:#dadada;"></div>
<div style="left:261px;top:896px;width:35px;height:1px;background:#dadada;"></div>
<div style="left:261px;top:921px;width:35px;height:1px;background:#dadada;"></div>
<div style="left:261px;top:406px;width:35px;height:1px;background:#dadada;"></div>
<div style="left:296px;top:406px;width:896px;height:1px;background:#dadada;"></div>
<span class="t" id="t77" style="top:316px;font-size:12px;line-height:20px;color:#666;left:166.2px;transform:scaleX(0.7623);transform-origin:0 50%;">ヘッダー</span>
<div style="left:165px;top:333px;width:1124px;height:48px;border:1px solid #ababab;box-sizing:border-box;background:#fff;"></div>
<div style="left:539px;top:333px;width:376px;height:48px;border:1px solid #6a6a6a;border-right:2px solid #3c3c3c;border-bottom:2px solid #3c3c3c;box-sizing:border-box;background:#fff;"></div>
<div style="left:727px;top:335px;width:1px;height:18px;background:#000;"></div>
<div style="left:296px;top:407px;width:896px;height:40px;background:#002060;"></div>
<span class="t c" id="t78" style="top:414px;font-size:13.3px;line-height:22px;color:#fff;font-weight:700;font-family:'DejaVu Sans','Noto Sans CJK JP',sans-serif;left:314px;transform:scaleX(1.1331);transform-origin:0 50%;">貸出専用ビジネス書籍管理リスト</span>
<div style="left:296px;top:472px;width:896px;height:25px;background:#f2f2f2;"></div>
<div style="left:295px;top:447px;width:1px;height:24px;background:#808080;"></div>
<div style="left:295px;top:471px;width:1px;height:451px;background:#000;"></div>
<div style="left:358px;top:471px;width:1px;height:451px;background:#000;"></div>
<div style="left:421px;top:471px;width:1px;height:451px;background:#000;"></div>
<div style="left:996px;top:471px;width:1px;height:451px;background:#000;"></div>
<div style="left:1191px;top:471px;width:1px;height:451px;background:#000;"></div>
<div style="left:295px;top:471px;width:897px;height:1px;background:#000;"></div>
<div style="left:295px;top:496px;width:897px;height:1px;background:#000;"></div>
<div style="left:295px;top:521px;width:897px;height:1px;background:#000;"></div>
<div style="left:295px;top:546px;width:897px;height:1px;background:#000;"></div>
<div style="left:295px;top:571px;width:897px;height:1px;background:#000;"></div>
<div style="left:295px;top:596px;width:897px;height:1px;background:#000;"></div>
<div style="left:295px;top:621px;width:897px;height:1px;background:#000;"></div>
<div style="left:295px;top:646px;width:897px;height:1px;background:#000;"></div>
<div style="left:295px;top:671px;width:897px;height:1px;background:#000;"></div>
<div style="left:295px;top:696px;width:897px;height:1px;background:#000;"></div>
<div style="left:295px;top:721px;width:897px;height:1px;background:#000;"></div>
<div style="left:295px;top:746px;width:897px;height:1px;background:#000;"></div>
<div style="left:295px;top:771px;width:897px;height:1px;background:#000;"></div>
<div style="left:295px;top:796px;width:897px;height:1px;background:#000;"></div>
<div style="left:295px;top:821px;width:897px;height:1px;background:#000;"></div>
<div style="left:295px;top:846px;width:897px;height:1px;background:#000;"></div>
<div style="left:295px;top:871px;width:897px;height:1px;background:#000;"></div>
<div style="left:295px;top:896px;width:897px;height:1px;background:#000;"></div>
<div style="left:295px;top:921px;width:897px;height:1px;background:#000;"></div>
<span class="t c" id="t79" style="top:473px;font-size:12px;line-height:20px;color:#000;font-family:'DejaVu Sans','Noto Sans CJK JP',sans-serif;left:327px;transform:translateX(-50%) scaleX(1.1101);transform-origin:50% 50%;">貸出</span>
<span class="t c" id="t80" style="top:473px;font-size:12px;line-height:20px;color:#000;font-family:'DejaVu Sans','Noto Sans CJK JP',sans-serif;left:390px;transform:translateX(-50%) scaleX(1.1216);transform-origin:50% 50%;">管理<span class="l">ID</span></span>
<span class="t c" id="t81" style="top:473px;font-size:12px;line-height:20px;color:#000;font-family:'DejaVu Sans','Noto Sans CJK JP',sans-serif;left:423.5px;transform:scaleX(1.0914);transform-origin:0 50%;">タイトル名</span>
<span class="t c" id="t82" style="top:473px;font-size:12px;line-height:20px;color:#000;font-family:'DejaVu Sans','Noto Sans CJK JP',sans-serif;left:999px;transform:scaleX(1.1034);transform-origin:0 50%;">著者</span>
<span class="t c" id="t83" style="top:498px;font-size:12px;line-height:20px;color:#000;font-family:'DejaVu Sans','Noto Sans CJK JP',sans-serif;left:327.5px;transform:translateX(-50%) scaleX(1.1104);transform-origin:50% 50%;">貸出中</span>
<span class="t c" id="t84" style="top:498px;font-size:12px;line-height:20px;color:#000;font-family:'DejaVu Sans','Noto Sans CJK JP',sans-serif;left:390px;transform:translateX(-50%) scaleX(1.0936);transform-origin:50% 50%;"><span class="l">A001</span></span>
<span class="t c" id="t85" style="top:498px;font-size:12px;line-height:20px;color:#000;font-family:'DejaVu Sans','Noto Sans CJK JP',sans-serif;left:423.5px;transform:scaleX(1.0835);transform-origin:0 50%;">コピー年鑑<span class="l">2006</span></span>
<span class="t c" id="t86" style="top:498px;font-size:12px;line-height:20px;color:#000;font-family:'DejaVu Sans','Noto Sans CJK JP',sans-serif;left:999px;transform:scaleX(1.0818);transform-origin:0 50%;">東京コピーライターズクラブ</span>
<span class="t c" id="t87" style="top:523px;font-size:12px;line-height:20px;color:#000;font-family:'DejaVu Sans','Noto Sans CJK JP',sans-serif;left:390px;transform:translateX(-50%) scaleX(1.0936);transform-origin:50% 50%;"><span class="l">A002</span></span>
<span class="t c" id="t88" style="top:523px;font-size:12px;line-height:20px;color:#000;font-family:'DejaVu Sans','Noto Sans CJK JP',sans-serif;left:423.5px;transform:scaleX(1.0885);transform-origin:0 50%;">グリーンネイバーフッド―米国ポートランドにみる環境先進都市のつくりかたとつかいかた</span>
<span class="t c" id="t89" style="top:523px;font-size:12px;line-height:20px;color:#000;font-family:'DejaVu Sans','Noto Sans CJK JP',sans-serif;left:999px;transform:scaleX(1.0728);transform-origin:0 50%;">吹田 良平</span>
<span class="t c" id="t90" style="top:548px;font-size:12px;line-height:20px;color:#000;font-family:'DejaVu Sans','Noto Sans CJK JP',sans-serif;left:390px;transform:translateX(-50%) scaleX(1.0936);transform-origin:50% 50%;"><span class="l">A003</span></span>
<span class="t c" id="t91" style="top:548px;font-size:12px;line-height:20px;color:#000;font-family:'DejaVu Sans','Noto Sans CJK JP',sans-serif;left:423.5px;transform:scaleX(1.0897);transform-origin:0 50%;">ローマン アンド ウィリアムスの軌跡</span>
<span class="t c" id="t92" style="top:548px;font-size:12px;line-height:20px;color:#000;font-family:'DejaVu Sans','Noto Sans CJK JP',sans-serif;left:999px;transform:scaleX(1.0790);transform-origin:0 50%;">スティーヴン・アレッシュ</span>
<span class="t c" id="t93" style="top:573px;font-size:12px;line-height:20px;color:#000;font-family:'DejaVu Sans','Noto Sans CJK JP',sans-serif;left:390px;transform:translateX(-50%) scaleX(1.0936);transform-origin:50% 50%;"><span class="l">A004</span></span>
<span class="t c" id="t94" style="top:573px;font-size:12px;line-height:20px;color:#000;font-family:'DejaVu Sans','Noto Sans CJK JP',sans-serif;left:423.5px;transform:scaleX(1.1164);transform-origin:0 50%;"><span class="l">Shop Design (Design Books)</span></span>
<span class="t c" id="t95" style="top:573px;font-size:12px;line-height:20px;color:#000;font-family:'DejaVu Sans','Noto Sans CJK JP',sans-serif;left:999px;transform:scaleX(1.1065);transform-origin:0 50%;"><span class="l">DAAB</span></span>
<span class="t c" id="t96" style="top:598px;font-size:12px;line-height:20px;color:#000;font-family:'DejaVu Sans','Noto Sans CJK JP',sans-serif;left:327.5px;transform:translateX(-50%) scaleX(1.1104);transform-origin:50% 50%;">貸出中</span>
<span class="t c" id="t97" style="top:598px;font-size:12px;line-height:20px;color:#000;font-family:'DejaVu Sans','Noto Sans CJK JP',sans-serif;left:390px;transform:translateX(-50%) scaleX(1.0936);transform-origin:50% 50%;"><span class="l">A005</span></span>
<span class="t c" id="t98" style="top:598px;font-size:12px;line-height:20px;color:#000;font-family:'DejaVu Sans','Noto Sans CJK JP',sans-serif;left:423.5px;transform:scaleX(1.1250);transform-origin:0 50%;"><span class="l">Hotel Design (Daab Design Book)</span></span>
<span class="t c" id="t99" style="top:598px;font-size:12px;line-height:20px;color:#000;font-family:'DejaVu Sans','Noto Sans CJK JP',sans-serif;left:999px;transform:scaleX(1.1165);transform-origin:0 50%;"><span class="l">DAAB Press</span></span>
<span class="t c" id="t100" style="top:623px;font-size:12px;line-height:20px;color:#000;font-family:'DejaVu Sans','Noto Sans CJK JP',sans-serif;left:327.5px;transform:translateX(-50%) scaleX(1.1104);transform-origin:50% 50%;">貸出中</span>
<span class="t c" id="t101" style="top:623px;font-size:12px;line-height:20px;color:#000;font-family:'DejaVu Sans','Noto Sans CJK JP',sans-serif;left:390px;transform:translateX(-50%) scaleX(1.0936);transform-origin:50% 50%;"><span class="l">A006</span></span>
<span class="t c" id="t102" style="top:623px;font-size:12px;line-height:20px;color:#000;font-family:'DejaVu Sans','Noto Sans CJK JP',sans-serif;left:423.5px;transform:scaleX(1.0944);transform-origin:0 50%;"><span class="l">Floor Design</span></span>
<span class="t c" id="t103" style="top:623px;font-size:12px;line-height:20px;color:#000;font-family:'DejaVu Sans','Noto Sans CJK JP',sans-serif;left:999px;transform:scaleX(1.1118);transform-origin:0 50%;"><span class="l">Daab Books</span></span>
<span class="t c" id="t104" style="top:648px;font-size:12px;line-height:20px;color:#000;font-family:'DejaVu Sans','Noto Sans CJK JP',sans-serif;left:390px;transform:translateX(-50%) scaleX(1.0936);transform-origin:50% 50%;"><span class="l">A007</span></span>
<span class="t c" id="t105" style="top:648px;font-size:12px;line-height:20px;color:#000;font-family:'DejaVu Sans','Noto Sans CJK JP',sans-serif;left:423.5px;transform:scaleX(1.0985);transform-origin:0 50%;">ウェアハウススタイル<span class="l"> (</span>エイムック<span class="l"> 3075)</span></span>
<span class="t c" id="t106" style="top:648px;font-size:12px;line-height:20px;color:#000;font-family:'DejaVu Sans','Noto Sans CJK JP',sans-serif;left:999px;transform:scaleX(1.0790);transform-origin:0 50%;">エイ出版社編集部</span>
<span class="t c" id="t107" style="top:673px;font-size:12px;line-height:20px;color:#000;font-family:'DejaVu Sans','Noto Sans CJK JP',sans-serif;left:390px;transform:translateX(-50%) scaleX(1.0936);transform-origin:50% 50%;"><span class="l">A008</span></span>
<span class="t c" id="t108" style="top:673px;font-size:12px;line-height:20px;color:#000;font-family:'DejaVu Sans','Noto Sans CJK JP',sans-serif;left:423.5px;transform:scaleX(1.1196);transform-origin:0 50%;">サインボード・アート<span class="l"> (CLUTCH BOOKS)</span></span>
<span class="t c" id="t109" style="top:673px;font-size:12px;line-height:20px;color:#000;font-family:'DejaVu Sans','Noto Sans CJK JP',sans-serif;left:999px;transform:scaleX(1.0724);transform-origin:0 50%;">クラッチ編集部</span>
<span class="t c" id="t110" style="top:698px;font-size:12px;line-height:20px;color:#000;font-family:'DejaVu Sans','Noto Sans CJK JP',sans-serif;left:390px;transform:translateX(-50%) scaleX(1.0936);transform-origin:50% 50%;"><span class="l">A009</span></span>
<span class="t c" id="t111" style="top:698px;font-size:12px;line-height:20px;color:#000;font-family:'DejaVu Sans','Noto Sans CJK JP',sans-serif;left:423.5px;transform:scaleX(1.1089);transform-origin:0 50%;">インダストリアル・スタイル<span class="l"> (</span>エイムック<span class="l"> 3064 CLUTCH BOOKS)</span></span>
<span class="t c" id="t112" style="top:698px;font-size:12px;line-height:20px;color:#000;font-family:'DejaVu Sans','Noto Sans CJK JP',sans-serif;left:999px;transform:scaleX(1.0724);transform-origin:0 50%;">クラッチ編集部</span>
<span class="t c" id="t113" style="top:723px;font-size:12px;line-height:20px;color:#000;font-family:'DejaVu Sans','Noto Sans CJK JP',sans-serif;left:327.5px;transform:translateX(-50%) scaleX(1.1104);transform-origin:50% 50%;">貸出中</span>
<span class="t c" id="t114" style="top:723px;font-size:12px;line-height:20px;color:#000;font-family:'DejaVu Sans','Noto Sans CJK JP',sans-serif;left:390px;transform:translateX(-50%) scaleX(1.0936);transform-origin:50% 50%;"><span class="l">A010</span></span>
<span class="t c" id="t115" style="top:723px;font-size:12px;line-height:20px;color:#000;font-family:'DejaVu Sans','Noto Sans CJK JP',sans-serif;left:423.5px;transform:scaleX(1.0885);transform-origin:0 50%;">ザ・会社改造<span class="l"> 340</span>人からグローバル<span class="l">1</span>万人企業へ</span>
<span class="t c" id="t116" style="top:723px;font-size:12px;line-height:20px;color:#000;font-family:'DejaVu Sans','Noto Sans CJK JP',sans-serif;left:999px;transform:scaleX(1.0570);transform-origin:0 50%;">三枝 匡</span>
<span class="t c" id="t117" style="top:748px;font-size:12px;line-height:20px;color:#000;font-family:'DejaVu Sans','Noto Sans CJK JP',sans-serif;left:390px;transform:translateX(-50%) scaleX(1.0936);transform-origin:50% 50%;"><span class="l">A011</span></span>
<span class="t c" id="t118" style="top:748px;font-size:12px;line-height:20px;color:#000;font-family:'DejaVu Sans','Noto Sans CJK JP',sans-serif;left:423.5px;transform:scaleX(1.0859);transform-origin:0 50%;"><span class="l">3</span>分でわかるラテラル・シンキングの基本</span>
<span class="t c" id="t119" style="top:748px;font-size:12px;line-height:20px;color:#000;font-family:'DejaVu Sans','Noto Sans CJK JP',sans-serif;left:999px;transform:scaleX(1.0728);transform-origin:0 50%;">山下 貴史</span>
<span class="t c" id="t120" style="top:773px;font-size:12px;line-height:20px;color:#000;font-family:'DejaVu Sans','Noto Sans CJK JP',sans-serif;left:390px;transform:translateX(-50%) scaleX(1.0936);transform-origin:50% 50%;"><span class="l">A012</span></span>
<span class="t c" id="t121" style="top:773px;font-size:12px;line-height:20px;color:#000;font-family:'DejaVu Sans','Noto Sans CJK JP',sans-serif;left:423.5px;transform:scaleX(1.0802);transform-origin:0 50%;">「権力」を握る人の法則</span>
<span class="t c" id="t122" style="top:773px;font-size:12px;line-height:20px;color:#000;font-family:'DejaVu Sans','Noto Sans CJK JP',sans-serif;left:999px;transform:scaleX(1.0764);transform-origin:0 50%;">ジェフリー・フェファー</span>
<span class="t c" id="t123" style="top:798px;font-size:12px;line-height:20px;color:#000;font-family:'DejaVu Sans','Noto Sans CJK JP',sans-serif;left:390px;transform:translateX(-50%) scaleX(1.0936);transform-origin:50% 50%;"><span class="l">A013</span></span>
<span class="t c" id="t124" style="top:798px;font-size:12px;line-height:20px;color:#000;font-family:'DejaVu Sans','Noto Sans CJK JP',sans-serif;left:423.5px;transform:scaleX(1.0852);transform-origin:0 50%;">戦略参謀の仕事――プロフェッショナル人材になる<span class="l">79</span>のアドバイス</span>
<span class="t c" id="t125" style="top:798px;font-size:12px;line-height:20px;color:#000;font-family:'DejaVu Sans','Noto Sans CJK JP',sans-serif;left:999px;transform:scaleX(1.0728);transform-origin:0 50%;">稲田 将人</span>
<span class="t c" id="t126" style="top:823px;font-size:12px;line-height:20px;color:#000;font-family:'DejaVu Sans','Noto Sans CJK JP',sans-serif;left:390px;transform:translateX(-50%) scaleX(1.0936);transform-origin:50% 50%;"><span class="l">A014</span></span>
<span class="t c" id="t127" style="top:823px;font-size:12px;line-height:20px;color:#000;font-family:'DejaVu Sans','Noto Sans CJK JP',sans-serif;left:423.5px;transform:scaleX(1.0818);transform-origin:0 50%;">腸が変われば人生が変わる 驚異の腸内フローラ</span>
<span class="t c" id="t128" style="top:823px;font-size:12px;line-height:20px;color:#000;font-family:'DejaVu Sans','Noto Sans CJK JP',sans-serif;left:999px;transform:scaleX(1.0728);transform-origin:0 50%;">田中 保郎</span>
<span class="t c" id="t129" style="top:848px;font-size:12px;line-height:20px;color:#000;font-family:'DejaVu Sans','Noto Sans CJK JP',sans-serif;left:327.5px;transform:translateX(-50%) scaleX(1.1104);transform-origin:50% 50%;">貸出中</span>
<span class="t c" id="t130" style="top:848px;font-size:12px;line-height:20px;color:#000;font-family:'DejaVu Sans','Noto Sans CJK JP',sans-serif;left:390px;transform:translateX(-50%) scaleX(1.0936);transform-origin:50% 50%;"><span class="l">A015</span></span>
<span class="t c" id="t131" style="top:848px;font-size:12px;line-height:20px;color:#000;font-family:'DejaVu Sans','Noto Sans CJK JP',sans-serif;left:423.5px;transform:scaleX(1.0966);transform-origin:0 50%;"><span class="l">HEAD STRONG </span>シリコンバレー式頭がよくなる全技術</span>
<span class="t c" id="t132" style="top:848px;font-size:12px;line-height:20px;color:#000;font-family:'DejaVu Sans','Noto Sans CJK JP',sans-serif;left:999px;transform:scaleX(1.0748);transform-origin:0 50%;">デイヴ・アスプリー</span>
<span class="t c" id="t133" style="top:873px;font-size:12px;line-height:20px;color:#000;font-family:'DejaVu Sans','Noto Sans CJK JP',sans-serif;left:390px;transform:translateX(-50%) scaleX(1.0936);transform-origin:50% 50%;"><span class="l">A016</span></span>
<span class="t c" id="t134" style="top:873px;font-size:12px;line-height:20px;color:#000;font-family:'DejaVu Sans','Noto Sans CJK JP',sans-serif;left:423.5px;transform:scaleX(1.0838);transform-origin:0 50%;">頭皮ケアで始める美髪バイブル</span>
<span class="t c" id="t135" style="top:873px;font-size:12px;line-height:20px;color:#000;font-family:'DejaVu Sans','Noto Sans CJK JP',sans-serif;left:999px;transform:scaleX(1.0748);transform-origin:0 50%;">山本 未奈子</span>
<span class="t c" id="t136" style="top:898px;font-size:12px;line-height:20px;color:#000;font-family:'DejaVu Sans','Noto Sans CJK JP',sans-serif;left:390px;transform:translateX(-50%) scaleX(1.0936);transform-origin:50% 50%;"><span class="l">A017</span></span>
<span class="t c" id="t137" style="top:898px;font-size:12px;line-height:20px;color:#000;font-family:'DejaVu Sans','Noto Sans CJK JP',sans-serif;left:423.5px;transform:scaleX(1.0790);transform-origin:0 50%;">戦国武将の健康術</span>
<span class="t c" id="t138" style="top:898px;font-size:12px;line-height:20px;color:#000;font-family:'DejaVu Sans','Noto Sans CJK JP',sans-serif;left:999px;transform:scaleX(1.0748);transform-origin:0 50%;">植田 美津恵</span>
<div style="left:260px;top:380px;width:37px;height:28px;border:2px solid #107c41;box-sizing:border-box;"></div>
<div style="left:292px;top:403px;width:7px;height:7px;background:#107c41;border:1px solid #fff;box-sizing:border-box;"></div>
<div style="left:1374px;top:299px;width:140px;height:623px;overflow:hidden;"><div style="left:101px;top:82px;width:1px;height:26px;background:#dadada;"></div><div style="left:101px;top:82px;width:60px;height:1px;background:#dadada;"></div><div style="left:101px;top:107px;width:60px;height:1px;background:#dadada;"></div><div style="left:101px;top:108px;width:60px;height:40px;background:#002060;"></div><div style="left:101px;top:148px;width:1px;height:25px;background:#dadada;"></div><div style="left:101px;top:173px;width:60px;height:25px;background:#f2f2f2;"></div><div style="left:101px;top:172px;width:1px;height:451px;background:#000;"></div><div style="left:101px;top:172px;width:60px;height:1px;background:#000;"></div><div style="left:101px;top:197px;width:60px;height:1px;background:#000;"></div><div style="left:101px;top:222px;width:60px;height:1px;background:#000;"></div><div style="left:101px;top:247px;width:60px;height:1px;background:#000;"></div><div style="left:101px;top:272px;width:60px;height:1px;background:#000;"></div><div style="left:101px;top:297px;width:60px;height:1px;background:#000;"></div><div style="left:101px;top:322px;width:60px;height:1px;background:#000;"></div><div style="left:101px;top:347px;width:60px;height:1px;background:#000;"></div><div style="left:101px;top:372px;width:60px;height:1px;background:#000;"></div><div style="left:101px;top:397px;width:60px;height:1px;background:#000;"></div><div style="left:101px;top:422px;width:60px;height:1px;background:#000;"></div><div style="left:101px;top:447px;width:60px;height:1px;background:#000;"></div><div style="left:101px;top:472px;width:60px;height:1px;background:#000;"></div><div style="left:101px;top:497px;width:60px;height:1px;background:#000;"></div><div style="left:101px;top:522px;width:60px;height:1px;background:#000;"></div><div style="left:101px;top:547px;width:60px;height:1px;background:#000;"></div><div style="left:101px;top:572px;width:60px;height:1px;background:#000;"></div><div style="left:101px;top:597px;width:60px;height:1px;background:#000;"></div><div style="left:101px;top:622px;width:60px;height:1px;background:#000;"></div></div>
<div style="left:1374px;top:299px;width:140px;height:623px;overflow:hidden;">
<span class="t c" id="t139" style="top:174px;font-size:12px;line-height:20px;color:#000;font-family:'DejaVu Sans','Noto Sans CJK JP',sans-serif;left:104.2px;transform:scaleX(1.1104);transform-origin:0 50%;">出版社</span>
<span class="t c" id="t140" style="top:199px;font-size:12px;line-height:20px;color:#000;font-family:'DejaVu Sans','Noto Sans CJK JP',sans-serif;left:104.2px;transform:scaleX(1.1105);transform-origin:0 50%;">宣伝会議</span>
<span class="t c" id="t141" style="top:224px;font-size:12px;line-height:20px;color:#000;font-family:'DejaVu Sans','Noto Sans CJK JP',sans-serif;left:104.2px;transform:scaleX(1.1105);transform-origin:0 50%;">繊研新聞社</span>
<span class="t c" id="t142" style="top:249px;font-size:12px;line-height:20px;color:#000;font-family:'DejaVu Sans','Noto Sans CJK JP',sans-serif;left:104.2px;transform:scaleX(1.1139);transform-origin:0 50%;">グラフィック社</span>
<span class="t c" id="t143" style="top:274px;font-size:12px;line-height:20px;color:#000;font-family:'DejaVu Sans','Noto Sans CJK JP',sans-serif;left:104.2px;transform:scaleX(1.1040);transform-origin:0 50%;"><span class="l">Daab</span></span>
<span class="t c" id="t144" style="top:299px;font-size:12px;line-height:20px;color:#000;font-family:'DejaVu Sans','Noto Sans CJK JP',sans-serif;left:104.2px;transform:scaleX(1.1040);transform-origin:0 50%;"><span class="l">Daab</span></span>
<span class="t c" id="t145" style="top:324px;font-size:12px;line-height:20px;color:#000;font-family:'DejaVu Sans','Noto Sans CJK JP',sans-serif;left:104.2px;transform:scaleX(1.1040);transform-origin:0 50%;"><span class="l">Daab</span></span>
<span class="t c" id="t146" style="top:349px;font-size:12px;line-height:20px;color:#000;font-family:'DejaVu Sans','Noto Sans CJK JP',sans-serif;left:104.2px;transform:scaleX(1.1105);transform-origin:0 50%;">エイ出版社</span>
<span class="t c" id="t147" style="top:374px;font-size:12px;line-height:20px;color:#000;font-family:'DejaVu Sans','Noto Sans CJK JP',sans-serif;left:104.2px;transform:scaleX(1.1105);transform-origin:0 50%;">エイ出版社</span>
<span class="t c" id="t148" style="top:399px;font-size:12px;line-height:20px;color:#000;font-family:'DejaVu Sans','Noto Sans CJK JP',sans-serif;left:104.2px;transform:scaleX(1.1105);transform-origin:0 50%;">エイ出版社</span>
<span class="t c" id="t149" style="top:424px;font-size:12px;line-height:20px;color:#000;font-family:'DejaVu Sans','Noto Sans CJK JP',sans-serif;left:104.2px;transform:scaleX(1.1107);transform-origin:0 50%;">日本経済新聞出版社</span>
<span class="t c" id="t150" style="top:449px;font-size:12px;line-height:20px;color:#000;font-family:'DejaVu Sans','Noto Sans CJK JP',sans-serif;left:104.2px;transform:scaleX(1.1106);transform-origin:0 50%;">日本実業出版社</span>
<span class="t c" id="t151" style="top:474px;font-size:12px;line-height:20px;color:#000;font-family:'DejaVu Sans','Noto Sans CJK JP',sans-serif;left:104.2px;transform:scaleX(1.1107);transform-origin:0 50%;">日本経済新聞出版社</span>
<span class="t c" id="t152" style="top:499px;font-size:12px;line-height:20px;color:#000;font-family:'DejaVu Sans','Noto Sans CJK JP',sans-serif;left:104.2px;transform:scaleX(1.1154);transform-origin:0 50%;">ダイヤモンド社</span>
<span class="t c" id="t153" style="top:524px;font-size:12px;line-height:20px;color:#000;font-family:'DejaVu Sans','Noto Sans CJK JP',sans-serif;left:104.2px;transform:scaleX(1.1105);transform-origin:0 50%;">ぶんか社</span>
<span class="t c" id="t154" style="top:549px;font-size:12px;line-height:20px;color:#000;font-family:'DejaVu Sans','Noto Sans CJK JP',sans-serif;left:104.2px;transform:scaleX(1.1154);transform-origin:0 50%;">ダイヤモンド社</span>
<span class="t c" id="t155" style="top:574px;font-size:12px;line-height:20px;color:#000;font-family:'DejaVu Sans','Noto Sans CJK JP',sans-serif;left:104.2px;transform:scaleX(1.1104);transform-origin:0 50%;">講談社</span>
<span class="t c" id="t156" style="top:599px;font-size:12px;line-height:20px;color:#000;font-family:'DejaVu Sans','Noto Sans CJK JP',sans-serif;left:104.2px;transform:scaleX(1.1105);transform-origin:0 50%;">ゆいぽおと</span>
</div>
<div style="left:1514px;top:225px;width:22px;height:697px;background:linear-gradient(180deg,#ece6e6 0%,#ebe7e7 50%,#e8e8e8 100%);"></div>
<div style="left:0px;top:922px;width:1536px;height:54px;background:linear-gradient(90deg,#e9ebf0 0%,#e9ebf0 45%,#e8e8e9 75%,#e9e9e9 100%);"></div>
<div style="left:0px;top:954px;width:1536px;height:22px;background:linear-gradient(90deg,#eff0f4 0%,#f0f1f4 45%,#f2f2f3 75%,#f3f3f3 100%);"></div>
<div style="left:0px;top:954px;width:1536px;height:1px;background:#d0ced2;"></div>
<div style="left:1517px;top:225px;width:17px;height:700px;background:#f6f6f6;border-radius:8.5px;"></div>
<svg style="left:1520px;top:229px;" width="11" height="9" viewBox="0 0 11 9"><path d="M5.5 1.2 10 7.4Q10.4 8.2 9.4 8.2H1.6Q0.6 8.2 1 7.4Z" fill="#707070"/></svg>
<div style="left:1521px;top:242px;width:9px;height:115px;background:#707070;border-radius:4.5px;"></div>
<svg style="left:1520px;top:912px;" width="11" height="9" viewBox="0 0 11 9"><path d="M5.5 7.8 10 1.6Q10.4 0.8 9.4 0.8H1.6Q0.6 0.8 1 1.6Z" fill="#707070"/></svg>
<div style="left:116px;top:922px;width:68.5px;height:28px;background:#fff;border-radius:0 0 6px 6px;"></div>
<svg style="left:110px;top:922px;" width="6" height="6" viewBox="0 0 6 6"><path d="M0 0H6V6Q6 0 0 0Z" fill="#fff"/></svg>
<svg style="left:184.5px;top:922px;" width="6" height="6" viewBox="0 0 6 6"><path d="M6 0H0V6Q0 0 6 0Z" fill="#fff"/></svg>
<span class="t" id="t157" style="top:924px;font-size:15px;line-height:24px;color:#2b2b2b;font-family:'DejaVu Sans','Noto Sans CJK JP',sans-serif;left:126px;transform:scaleX(0.8881);transform-origin:0 50%;">Sheet1</span>
<div style="left:124px;top:945px;width:52px;height:2px;background:#107c41;"></div>
<div style="left:188px;top:929px;width:1px;height:18px;background:#cbcbcb;"></div>
<svg style="left:27px;top:931px;" width="10" height="13" viewBox="0 0 10 13"><path d="M8 1.4 2 6.4 8 11.4" fill="none" stroke="#8a8a8a" stroke-width="1.1"/></svg>
<svg style="left:59px;top:931px;" width="10" height="13" viewBox="0 0 10 13"><path d="M2 1.4 8 6.4 2 11.4" fill="none" stroke="#8a8a8a" stroke-width="1.1"/></svg>
<svg style="left:230px;top:931px;" width="14" height="14" viewBox="0 0 14 14"><path d="M7 1.4V12.4M1.4 6.9H12.6" fill="none" stroke="#858585" stroke-width="1"/></svg>
<div style="left:923px;top:933.5px;width:2px;height:2px;background:#444;"></div>
<div style="left:923px;top:938px;width:2px;height:2px;background:#444;"></div>
<div style="left:923px;top:942.5px;width:2px;height:2px;background:#444;"></div>
<div style="left:940px;top:929px;width:577px;height:17px;background:#f3f3f3;border-radius:8.5px;"></div>
<svg style="left:944.5px;top:932px;" width="8" height="11" viewBox="0 0 8 11"><path d="M6.6 1.4V9.6Q6.6 10.4 5.9 9.9L0.8 6Q0.4 5.5 0.8 5L5.9 1.1Q6.6 0.6 6.6 1.4Z" fill="#707070"/></svg>
<svg style="left:1504.3px;top:932px;" width="8" height="11" viewBox="0 0 8 11"><path d="M1.4 1.4V9.6Q1.4 10.4 2.1 9.9L7.2 6Q7.6 5.5 7.2 5L2.1 1.1Q1.4 0.6 1.4 1.4Z" fill="#707070"/></svg>
<div style="left:957px;top:933px;width:338.5px;height:9px;background:#707070;border-radius:4.5px;"></div>
<span class="t" id="t158" style="top:956px;font-size:12px;line-height:20px;color:#242424;left:7.5px;transform:scaleX(0.9893);transform-origin:0 50%;">準備完了</span>
<svg style="left:75px;top:958px;" width="16" height="14" viewBox="0 0 16 14"><g fill="none" stroke="#333" stroke-width="1"><path d="M1.5 12.5V1.5H13.5V5"/><path d="M1.5 4.5H13.5M3.5 7.5H7M3.5 10H6"/><circle cx="10.6" cy="9.6" r="3.3"/></g><circle cx="10.6" cy="9.6" r="1.4" fill="#333"/></svg>
<svg style="left:106px;top:957px;" width="16" height="16" viewBox="0 0 16 16"><g fill="none" stroke="#333" stroke-width="1" stroke-linecap="round" stroke-linejoin="round"><circle cx="6.4" cy="3" r="1.6"/><path d="M1.6 6.2C4.4 7 8.4 7 11.2 6.2M5 7V9.6L3.4 14M7.8 7V9.2"/><path d="M8.4 12.2 10.4 14.2 14.2 9.6"/></g></svg>
<span class="t" id="t159" style="top:956px;font-size:12px;line-height:20px;color:#242424;left:125.5px;transform:scaleX(0.7946);transform-origin:0 50%;">アクセシビリティ: 問題ありません</span>
<span class="t" id="t160" style="top:956px;font-size:12px;line-height:20px;color:#242424;left:292px;transform:scaleX(0.9727);transform-origin:0 50%;">ページ: 1/10</span>
<svg style="left:1243px;top:958px;" width="14" height="14" viewBox="0 0 14 14"><g fill="none" stroke="#b4b4b4" stroke-width="1"><rect x="1" y="1" width="12" height="12"/><path d="M5 1V13M9 1V13M1 5H13M1 9H13"/></g></svg>
<svg style="left:1283px;top:958px;" width="14" height="14" viewBox="0 0 14 14"><g fill="none" stroke="#b4b4b4" stroke-width="1"><rect x="0.5" y="0.5" width="13" height="12.5"/><rect x="3.5" y="3.5" width="7" height="7"/><path d="M5 5.5H9M5 7.5H9"/></g></svg>
<svg style="left:1323px;top:958px;" width="14" height="14" viewBox="0 0 14 14"><g fill="none" stroke="#b4b4b4" stroke-width="1"><rect x="0.5" y="0.5" width="13" height="12.5"/><path d="M4.5 0.5V6.5H9.5V0.5M0.5 6.5H13.5"/></g></svg>
<div style="left:1356px;top:965px;width:8px;height:1px;background:#b4b4b4;"></div>
<div style="left:1369px;top:965px;width:100px;height:1px;background:#6a6a6a;"></div>
<div style="left:1419px;top:962px;width:1px;height:7px;background:#6a6a6a;"></div>
<svg style="left:1473px;top:960px;" width="9" height="9" viewBox="0 0 9 9"><path d="M4.5 0.5V8.5M0.5 4.5H8.5" stroke="#b4b4b4" stroke-width="1" fill="none"/></svg>
<span class="t" id="t161" style="top:955px;font-size:12.5px;line-height:20px;color:#b4b4b4;left:1495.5px;">100%</span>
</div></body></html>
